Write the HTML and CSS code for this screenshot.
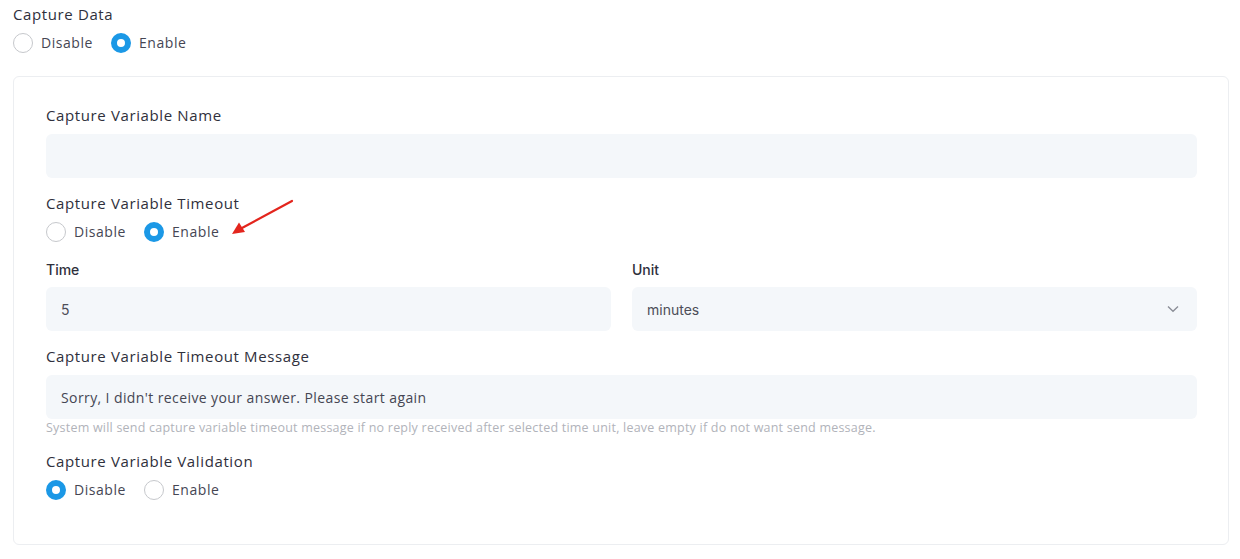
FILE: index.html
```html
<!DOCTYPE html>
<html>
<head>
<meta charset="utf-8">
<link rel="stylesheet" href="styles.css">
</head>
<body>
<div class="page">
  <div class="title">Capture Data</div>
  <div class="radios top-radios">
    <label class="radio"><span class="dot"></span><span class="rtext">Disable</span></label>
    <label class="radio"><span class="dot on"></span><span class="rtext">Enable</span></label>
  </div>

  <div class="card">
    <div class="label">Capture Variable Name</div>
    <div class="input"></div>

    <div class="label gap">Capture Variable Timeout</div>
    <div class="radios">
      <label class="radio"><span class="dot"></span><span class="rtext">Disable</span></label>
      <label class="radio"><span class="dot on"></span><span class="rtext">Enable</span></label>
    </div>

    <div class="row">
      <div class="col">
        <div class="label alt">Time</div>
        <div class="input alt-text">5</div>
      </div>
      <div class="col">
        <div class="label alt">Unit</div>
        <div class="input alt-text select">minutes
          <svg class="chev" width="12" height="8" viewBox="0 0 12 8"><path d="M1 1.5 L6 6.3 L11 1.5" fill="none" stroke="#8a8d96" stroke-width="1.3"/></svg>
        </div>
      </div>
    </div>

    <div class="label msg">Capture Variable Timeout Message</div>
    <div class="input">Sorry, I didn't receive your answer. Please start again</div>
    <div class="help">System will send capture variable timeout message if no reply received after selected time unit, leave empty if do not want send message.</div>

    <div class="label gap">Capture Variable Validation</div>
    <div class="radios">
      <label class="radio"><span class="dot on"></span><span class="rtext">Disable</span></label>
      <label class="radio"><span class="dot"></span><span class="rtext">Enable</span></label>
    </div>
  </div>

  <svg class="arrow" width="80" height="50" viewBox="0 0 80 50">
    <line x1="70" y1="6" x2="20" y2="33" stroke="#e3251d" stroke-width="2.2" stroke-linecap="round"/>
    <polygon points="10,39 17,27.5 23,37" fill="#e3251d"/>
  </svg>
</div>
</body>
</html>
```

FILE: styles.css
```css
* { box-sizing: border-box; }
html, body { margin: 0; padding: 0; background: #ffffff; }
body {
  font-family: "Open Sans", "DejaVu Sans", sans-serif;
  color: #3b3c4a;
}
.page {
  position: relative;
  padding: 3px 11px 0 13px;
  width: 1240px;
  height: 559px;
}
.title, .label {
  font-size: 15px;
  line-height: 22px;
  font-weight: 500;
  color: #2f303c;
  letter-spacing: 0.62px;
}
.radios {
  display: flex;
  align-items: center;
  gap: 18px;
  height: 20px;
  margin-top: 8px;
}
.top-radios { margin-top: 8px; }
.radio {
  display: flex;
  align-items: center;
  gap: 8px;
}
.dot {
  width: 20px;
  height: 20px;
  border-radius: 50%;
  border: 1px solid #c6c8cc;
  background: #fff;
}
.dot.on {
  border: 6px solid #1b98e6;
}
.rtext {
  font-size: 14px;
  line-height: 20px;
  color: #454653;
  letter-spacing: 0.55px;
}
.card {
  margin-top: 23px;
  border: 1px solid #eceef1;
  border-radius: 6px;
  padding: 27px 31px 44px 32px;
  height: 469px;
}
.input {
  margin-top: 8px;
  height: 44px;
  border-radius: 6px;
  background: #f4f7fa;
  padding: 0 15px;
  display: flex;
  align-items: center;
  font-size: 14px;
  color: #454653;
  letter-spacing: 0.4px;
}
.label.gap { margin-top: 14px; }
.label.msg { margin-top: 14px; }
.row {
  display: grid;
  grid-template-columns: 1fr 1fr;
  gap: 21px;
  margin-top: 17px;
}
.label.alt {
  font-family: Inter, Roboto, sans-serif;
  font-size: 14px;
  font-weight: 500;
  letter-spacing: 0;
}
.input.alt-text {
  margin-top: 6px;
  font-family: Inter, Roboto, sans-serif;
  font-size: 14px;
  color: #4d4e58;
  letter-spacing: 0;
  padding: 0 15px;
}
.select { justify-content: space-between; }
.chev { margin-right: 3px; }
.help {
  margin-top: 0;
  font-size: 12.5px;
  line-height: 17px;
  color: #b1b3ba;
  letter-spacing: 0.22px;
}
.arrow {
  position: absolute;
  left: 222px;
  top: 195px;
}
```
